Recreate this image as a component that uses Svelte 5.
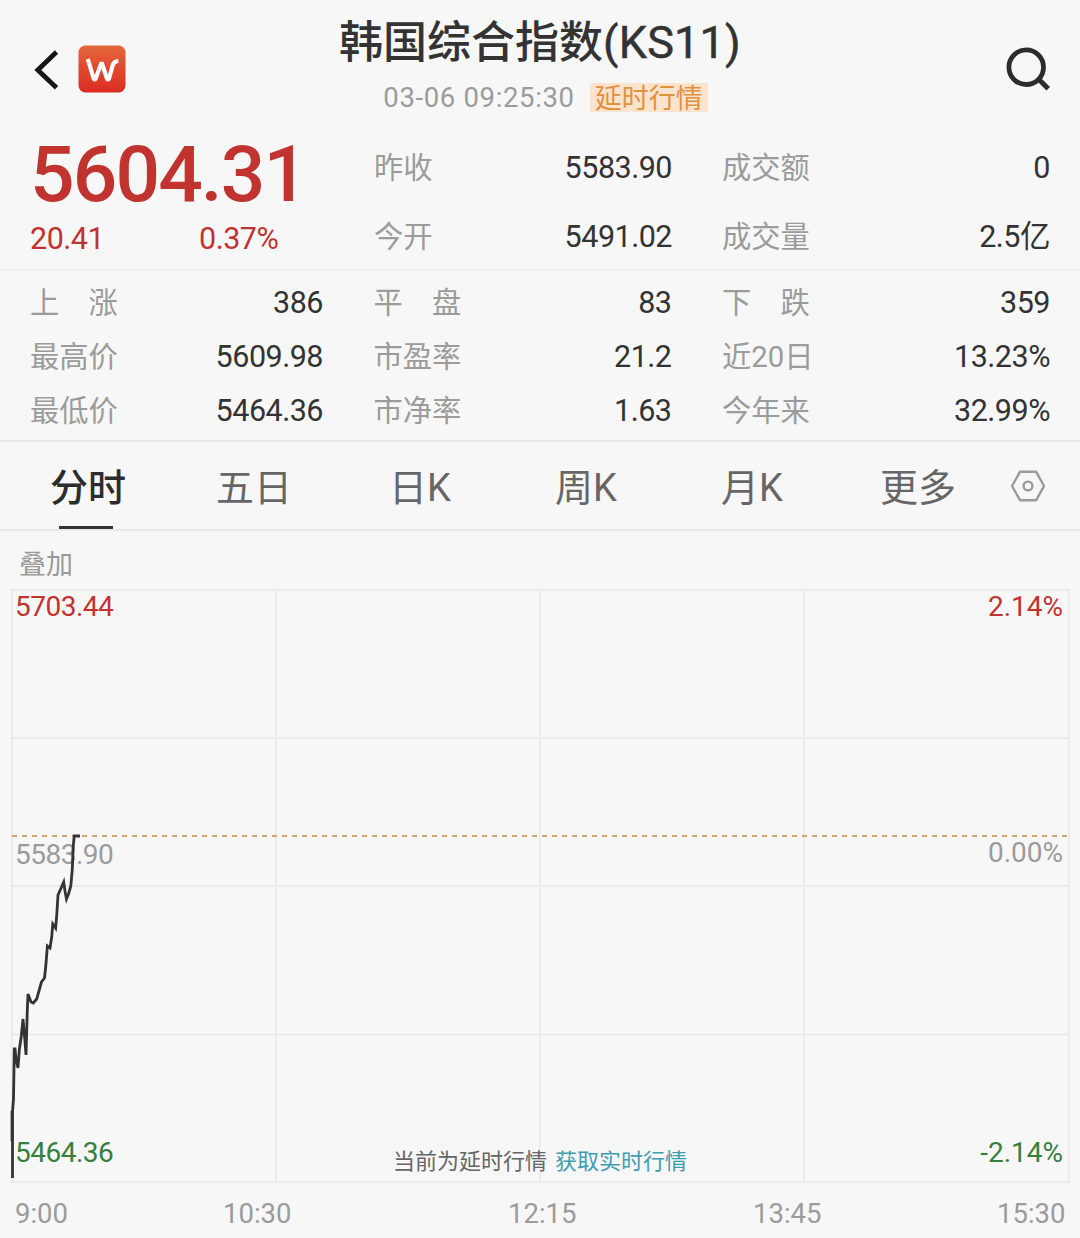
<script>
  const summary = [
    { label: '昨收', value: '5583.90' },
    { label: '成交额', value: '0' },
    { label: '今开', value: '5491.02' },
    { label: '成交量', value: '2.5亿' },
  ];

  const details = [
    { label: '上　涨', value: '386' },
    { label: '平　盘', value: '83' },
    { label: '下　跌', value: '359' },
    { label: '最高价', value: '5609.98' },
    { label: '市盈率', value: '21.2' },
    { label: '近20日', value: '13.23%' },
    { label: '最低价', value: '5464.36' },
    { label: '市净率', value: '1.63' },
    { label: '今年来', value: '32.99%' },
  ];

  const tabs = ['分时', '五日', '日K', '周K', '月K', '更多'];
  const times = ['9:00', '10:30', '12:15', '13:45', '15:30'];

  let activeTab = $state('分时');

  // Plot area in px, one unit per pixel.
  const plotWidth = 1059;
  const plotHeight = 594;
  const columns = [1, 265, 529, 793, 1058];
  const rows = [1, 149, 297, 445.5, 593];
  const prevCloseY = 247;

  const points = [
    [1.5, 589], [1.5, 523], [2.5, 510], [3.3, 460], [4, 460], [5, 470], [7, 479],
    [8.3, 461], [10.3, 447], [12, 430], [14, 453], [15, 466], [16.3, 421], [17, 405],
    [20, 413], [22.3, 414], [25.7, 410], [30.5, 393], [33.5, 389], [34.8, 377],
    [36.4, 357], [39, 359], [40.7, 348], [41.8, 335], [44.6, 339], [45.7, 327],
    [47, 306], [52.7, 293], [54, 302], [55.5, 310], [57.5, 305], [59.8, 297],
    [61.3, 280], [62.3, 256.5], [63.2, 247], [69, 247],
  ];
  const pricePath = points.map(([x, y]) => `${x},${y}`).join(' ');
</script>

<main class="quote">
  <header class="header">
    <div class="header-left">
      <svg class="back" width="26" height="42" viewBox="0 0 26 42" aria-label="返回">
        <path d="M22.5 3 L3.8 21 L22.5 38.8" fill="none" stroke="#161616" stroke-width="4.8" />
      </svg>
      <svg class="logo" width="48" height="48" viewBox="0 0 48 48" aria-hidden="true">
        <defs>
          <linearGradient id="logo-fill" x1="0" y1="0" x2="0" y2="1">
            <stop offset="0" stop-color="#e4673a" />
            <stop offset="1" stop-color="#db2b21" />
          </linearGradient>
        </defs>
        <rect x="0.5" y="0.5" width="47" height="47" rx="7" fill="url(#logo-fill)" />
        <path
          d="M9.8 14 L15.9 34.5 H17.3 L23.6 17.5 L29.3 34.5 H30.7 L34.8 20 Q36 16.2 40.3 16"
          fill="none"
          stroke="#fff"
          stroke-width="4.2"
          stroke-linejoin="bevel"
        />
      </svg>
    </div>

    <div class="heading">
      <h1>韩国综合指数<span>(KS11)</span></h1>
      <div class="subtitle">
        <time>03-06 09:25:30</time>
        <span class="tag">延时行情</span>
      </div>
    </div>

    <svg class="search" width="46" height="46" viewBox="0 0 46 46" aria-label="搜索">
      <circle cx="21.2" cy="21.2" r="17.3" fill="none" stroke="#2c2c2c" stroke-width="4.8" />
      <path d="M33.5 33 L43.2 42.8" stroke="#2c2c2c" stroke-width="5" />
    </svg>
  </header>

  <section class="summary">
    <div class="price">
      <strong>5604.31</strong>
      <div class="change">
        <span>20.41</span>
        <span>0.37%</span>
      </div>
    </div>
    <dl class="summary-grid">
      {#each summary as item}
        <div class="stat">
          <dt>{item.label}</dt>
          <dd>{item.value}</dd>
        </div>
      {/each}
    </dl>
  </section>

  <dl class="details">
    {#each details as item}
      <div class="stat">
        <dt>{item.label}</dt>
        <dd>{item.value}</dd>
      </div>
    {/each}
  </dl>

  <nav class="tabs">
    {#each tabs as tab}
      <button type="button" class:active={tab === activeTab} onclick={() => (activeTab = tab)}>
        {tab}
      </button>
    {/each}
    <svg class="settings" width="36" height="32" viewBox="0 0 36 32" aria-label="设置">
      <g fill="none" stroke="#9a9a9a" stroke-width="2.4" stroke-linejoin="round">
        <path d="M10 1.8 H26.2 L34 16 L26.2 30.2 H10 L2 16 Z" />
        <circle cx="18" cy="16" r="4.4" />
      </g>
    </svg>
  </nav>

  <div class="overlay">叠加</div>

  <section class="plot">
    <svg width={plotWidth} height={plotHeight} viewBox="0 0 {plotWidth} {plotHeight}">
      {#each columns as x}
        <line class="grid-line" x1={x} x2={x} y1="0" y2={plotHeight} />
      {/each}
      {#each rows as y}
        <line class="grid-line" x1="0" x2={plotWidth} y1={y} y2={y} />
      {/each}
      <line class="prev-close" x1="1" x2={plotWidth} y1={prevCloseY} y2={prevCloseY} />
    </svg>
    <span class="mark high left">5703.44</span>
    <span class="mark high right">2.14%</span>
    <span class="mark mid left">5583.90</span>
    <span class="mark mid right">0.00%</span>
    <span class="mark low left">5464.36</span>
    <span class="mark low right">-2.14%</span>
    <svg class="price-line" width={plotWidth} height={plotHeight} viewBox="0 0 {plotWidth} {plotHeight}">
      <polyline points={pricePath} />
      <line x1="1" x2="1" y1="522" y2="552" />
    </svg>
    <p class="notice">当前为延时行情<a href="#realtime">获取实时行情</a></p>
  </section>

  <div class="times">
    {#each times as time}
      <span>{time}</span>
    {/each}
  </div>
</main>

<style>
  :global(body) {
    margin: 0;
    background: #f7f7f7;
  }

  .quote {
    width: 1080px;
    height: 1238px;
    overflow: hidden;
    background: #f7f7f7;
    color: #333;
    font-family: Roboto, 'Noto Sans CJK SC', sans-serif;
    font-size: 29.3px;
    line-height: 40px;
    white-space: nowrap;
  }

  .header {
    display: grid;
    grid-template-columns: 300px 1fr 300px;
    height: 132px;
  }

  .header-left {
    display: flex;
    align-items: flex-start;
    gap: 18px;
    padding: 45px 0 0 34px;
  }

  .back {
    margin-top: 4px;
  }

  .search {
    justify-self: end;
    margin: 46px 29px 0 0;
  }

  .heading {
    display: flex;
    flex-direction: column;
    align-items: center;
  }

  h1 {
    margin: 12px 0 0;
    font-size: 44px;
    font-weight: 500;
    line-height: 62px;
  }

  h1 span {
    font-size: 45px;
    font-weight: 400;
    letter-spacing: 0.2px;
    -webkit-text-stroke: 0.5px #333;
  }

  .subtitle {
    display: flex;
    align-items: center;
    gap: 15px;
    margin: 8px 0 0 11px;
    color: #9b9b9b;
    font-size: 27.5px;
    line-height: 31px;
  }

  time {
    letter-spacing: 0.65px;
  }

  .tag {
    width: 118px;
    height: 29px;
    background: #fbe3cd;
    color: #e2913f;
    font-size: 27px;
    line-height: 33px;
    text-align: center;
  }

  .summary {
    display: flex;
    height: 137px;
    padding: 0 30px;
    border-bottom: 2px solid #ececec;
  }

  .price {
    width: 344px;
    color: #c1332f;
  }

  .price strong {
    display: block;
    height: 88px;
    font-size: 78.5px;
    font-weight: 500;
    letter-spacing: -1.9px;
    line-height: 85px;
  }

  .change {
    display: flex;
    font-size: 30.5px;
    letter-spacing: -0.5px;
    line-height: 37px;
  }

  .change span:first-child {
    width: 169px;
  }

  .summary-grid {
    display: grid;
    grid-template-columns: 298px 328px;
    grid-auto-rows: 69px;
    column-gap: 50px;
    margin: 1px 0 0;
  }

  .stat {
    display: flex;
    align-items: center;
    justify-content: space-between;
  }

  dt {
    color: #9b9b9b;
  }

  dd {
    margin: 0;
    color: #333;
    font-size: 30.5px;
    letter-spacing: -0.5px;
  }

  .details {
    display: grid;
    grid-template-columns: 293px 298px 328px;
    grid-auto-rows: 54px;
    column-gap: 50.5px;
    height: 171px;
    margin: 0;
    padding: 5px 30px 0;
    box-sizing: border-box;
    border-bottom: 2px solid #e8e8e8;
  }

  .tabs {
    display: flex;
    align-items: center;
    height: 87px;
    padding-left: 5px;
    border-bottom: 2px solid #e8e8e8;
  }

  .tabs button {
    position: relative;
    width: 166px;
    height: 87px;
    padding: 4px 0 0;
    border: 0;
    background: none;
    color: #666;
    font: inherit;
    font-size: 38px;
    cursor: pointer;
  }

  .tabs .active {
    color: #2c2c2c;
    font-weight: 500;
  }

  .tabs .active::after {
    content: '';
    position: absolute;
    bottom: 0;
    left: 54px;
    width: 54px;
    height: 3px;
    background: #333;
  }

  .settings {
    margin-left: 9px;
  }

  .overlay {
    height: 58px;
    padding-left: 19px;
    color: #999;
    font-size: 27px;
    line-height: 69px;
  }

  .plot {
    position: relative;
    width: 1059px;
    height: 594px;
    margin-left: 11px;
  }

  .plot svg {
    display: block;
  }

  .grid-line {
    stroke: #ebebeb;
    stroke-width: 2;
  }

  .prev-close {
    stroke: #d4a56c;
    stroke-width: 2;
    stroke-dasharray: 5 5;
  }

  .price-line {
    position: absolute;
    inset: 0;
    overflow: visible;
    fill: none;
    stroke: #333;
    stroke-width: 2.8;
  }

  .mark {
    position: absolute;
    font-size: 28px;
    line-height: 30px;
  }

  .left {
    left: 4px;
    letter-spacing: -0.5px;
  }

  .right {
    right: 7px;
  }

  .high {
    top: 3px;
    color: #c1332f;
  }

  .mid {
    top: 249px;
    color: #9b9b9b;
  }

  .mid.left {
    top: 251px;
  }

  .low {
    bottom: 15px;
    color: #36803f;
  }

  .notice {
    position: absolute;
    bottom: 6px;
    left: 0;
    display: flex;
    justify-content: center;
    gap: 8px;
    width: 1058px;
    margin: 0;
    color: #666;
    font-size: 22px;
    line-height: 30px;
  }

  .notice a {
    color: #3f9db2;
    text-decoration: none;
  }

  .times {
    display: grid;
    grid-template-columns: 208px 285px 245px 244px auto;
    padding: 15px 0 0 15px;
    color: #9b9b9b;
    font-size: 27.5px;
    line-height: 32px;
  }
</style>
